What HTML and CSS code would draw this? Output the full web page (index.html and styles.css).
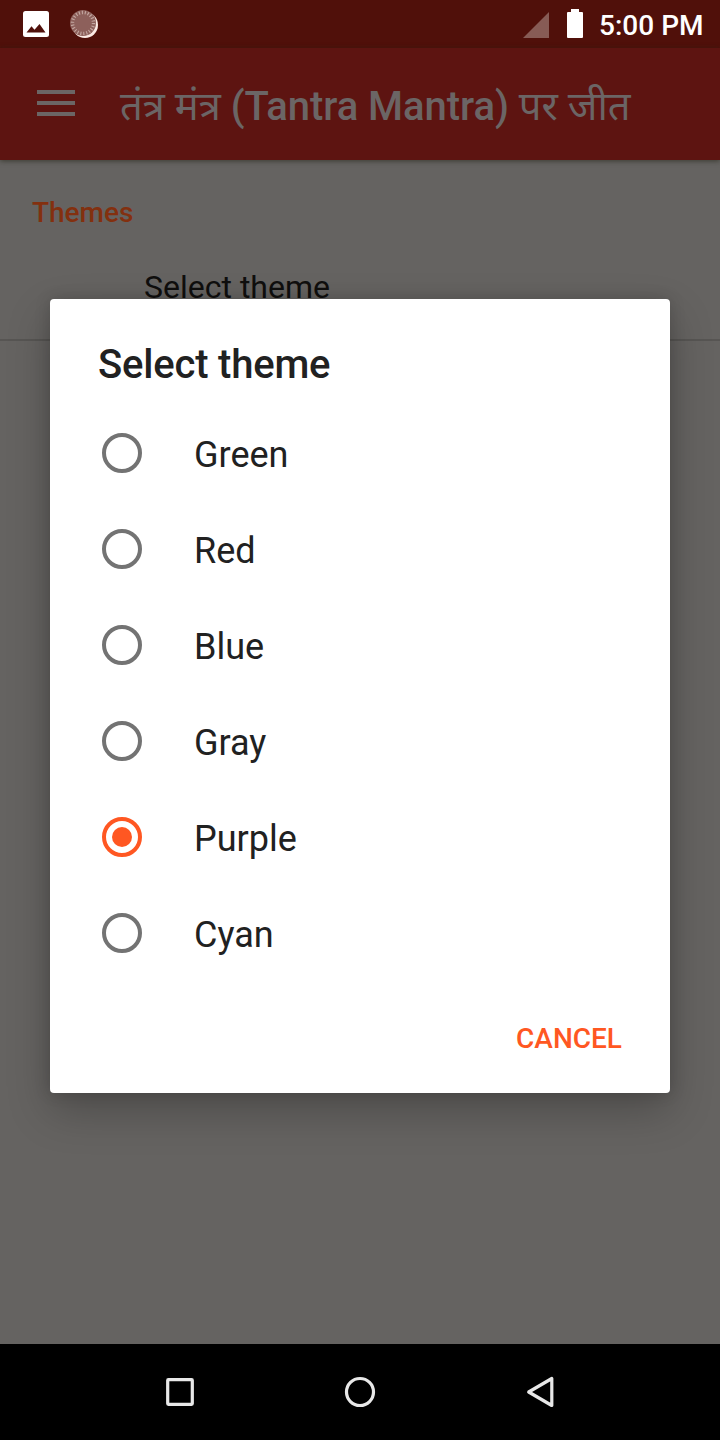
FILE: index.html
```html
<!DOCTYPE html>
<html lang="hi">
<head>
<meta charset="utf-8">
<title>Select theme</title>
<link rel="stylesheet" href="styles.css">
</head>
<body>
<div class="screen">
  <header class="status">
    <svg class="picture" width="26" height="26" viewBox="0 0 26 26"><rect width="26" height="26" rx="2.5" fill="#fff"/><path d="M3.5 21.5 8.5 15.3l3 3.4 5-5.7 6 8.5z" fill="#50100a"/></svg>
    <svg class="sync" width="28" height="28" viewBox="0 0 28 28"><circle cx="15" cy="15" r="13" fill="#fbeae4"/><circle cx="13" cy="13" r="13" fill="#8d605b"/><circle cx="13" cy="13" r="10.5" fill="none" stroke="#c4a8a2" stroke-width="3.4" stroke-dasharray="1.1 1.899"/></svg>
    <span class="spacer"></span>
    <svg class="signal" width="26" height="26" viewBox="0 0 26 26"><path d="M26 0v26H0z" fill="#875b55"/></svg>
    <svg class="battery" width="16" height="29" viewBox="0 0 16 29"><path d="M4 0h8v3h3q1 0 1 1v24q0 1-1 1H1q-1 0-1-1V4q0-1 1-1h3z" fill="#fff"/></svg>
    <time class="clock">5:00 PM</time>
  </header>
  <div class="toolbar">
    <svg class="menu" width="38" height="26" viewBox="0 0 38 26"><path d="M0 2h38M0 13h38M0 24h38" stroke="#6b6565" stroke-width="4"/></svg>
    <h1 class="title"><span class="hindi">तंत्र मंत्र</span> <span class="latin">(Tantra Mantra)</span> <span class="hindi">पर जीत</span></h1>
  </div>
  <main class="page">
    <h2 class="section">Themes</h2>
    <div class="preference">Select theme</div>
    <section class="dialog">
      <h2 class="heading">Select theme</h2>
      <ul class="options">
        <li class="option"><span class="radio"></span><span class="label">Green</span></li>
        <li class="option"><span class="radio"></span><span class="label">Red</span></li>
        <li class="option"><span class="radio"></span><span class="label">Blue</span></li>
        <li class="option"><span class="radio"></span><span class="label">Gray</span></li>
        <li class="option"><span class="radio checked"></span><span class="label">Purple</span></li>
        <li class="option"><span class="radio"></span><span class="label">Cyan</span></li>
      </ul>
      <div class="actions"><span class="cancel">CANCEL</span></div>
    </section>
  </main>
  <nav class="navigation">
    <svg width="36" height="36" viewBox="0 0 36 36"><rect x="5.7" y="5.7" width="24.6" height="24.6" rx=".7"/></svg>
    <svg width="36" height="36" viewBox="0 0 36 36"><circle cx="18" cy="18" r="13.5"/></svg>
    <svg width="36" height="36" viewBox="0 0 36 36"><path d="M29.8 4.5v27L6.7 18z"/></svg>
  </nav>
</div>
</body>
</html>
```
FILE: styles.css
```css
* { box-sizing: border-box; }
body { margin: 0; font-family: Roboto, "Noto Sans", sans-serif; }
h1, h2, ul { margin: 0; padding: 0; }
svg { display: block; flex: none; }
.screen { width: 720px; height: 1440px; display: flex; flex-direction: column; overflow: hidden; background: #656361; }
.status { height: 48px; flex: none; display: flex; background: #50100a; color: #fff; padding: 0 16.5px 0 23px; }
.picture { margin-top: 11px; }
.sync { margin: 10px 0 0 21px; }
.spacer { flex: 1; }
.signal { margin-top: 12px; }
.battery { margin: 9px 16px 0 18px; }
.clock { font-size: 28px; line-height: 52px; font-weight: 500; white-space: nowrap; }
.toolbar { height: 112px; flex: none; display: flex; padding-left: 37px; background: #5d1411; color: #6b6565; box-shadow: 0 1px 5px rgba(35, 35, 20, .65); z-index: 1; }
.menu { margin-top: 42px; }
.title { margin-left: 45px; font-size: 40px; line-height: 118px; font-weight: 500; white-space: nowrap; }
.latin { letter-spacing: -.05px; }
.hindi { font-weight: 400; }
.page { flex: 1; position: relative; }
.section { padding: 36px 32px 0; font-size: 28px; line-height: 33px; font-weight: 500; color: #83300f; }
.preference { height: 112px; padding: 39px 0 0 144px; font-size: 32px; line-height: 38px; color: #100f0e; border-bottom: 2px solid #575553; }
.dialog { position: absolute; left: 50px; top: 139px; width: 620px; height: 794px; padding: 41px 48px 0; background: #fff; border-radius: 4px; color: #212121; box-shadow: 0 18px 44px rgba(0, 0, 0, .24), 0 0 16px rgba(0, 0, 0, .16); }
.heading { font-size: 40px; line-height: 50px; font-weight: 500; letter-spacing: -.2px; }
.options { list-style: none; padding-top: 15px; }
.option { height: 96px; display: flex; align-items: center; padding-left: 4px; }
.radio { width: 40px; height: 40px; border: 4px solid #737373; border-radius: 50%; display: grid; place-items: center; }
.checked { border-color: #ff5722; }
.checked::after { content: ""; width: 20px; height: 20px; border-radius: 50%; background: #ff5722; }
.label { padding: 3px 0 0 52px; font-size: 36px; line-height: 44px; }
.actions { display: flex; justify-content: flex-end; padding-top: 40px; }
.cancel { font-size: 28px; line-height: 36px; font-weight: 500; color: #ff5722; }
.navigation { height: 96px; flex: none; display: flex; justify-content: center; align-items: center; gap: 144px; background: #000; }
.navigation svg { fill: none; stroke: #e8e8e8; stroke-width: 3.2; stroke-linejoin: round; }
```
